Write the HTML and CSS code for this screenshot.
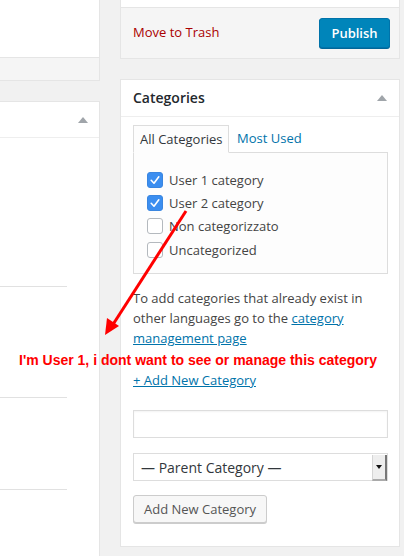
FILE: index.html
```html
<!DOCTYPE html>
<html>
<head>
<meta charset="utf-8">
<link rel="stylesheet" href="styles.css">
</head>
<body>
<div class="page">
  <div class="leftcol">
    <div class="lbox1">
      <div class="lbox1-top"></div>
      <div class="lbox1-foot"></div>
    </div>
    <div class="lbox2">
      <div class="lbox2-head"><span class="tri"></span></div>
      <div class="lbox2-body">
        <div class="rule r1"></div>
        <div class="rule r2"></div>
        <div class="rule r3"></div>
      </div>
    </div>
  </div>
  <div class="rightcol">
    <div class="pubbox">
      <div class="pub-top"></div>
      <div class="pub-foot">
        <a class="trash">Move to Trash</a>
        <button class="publish">Publish</button>
      </div>
    </div>
    <div class="catbox">
      <div class="cat-head">
        <h2>Categories</h2>
        <span class="tri"></span>
      </div>
      <div class="cat-inside">
        <div class="tabs">
          <span class="tab active">All Categories</span>
          <a class="tab link">Most Used</a>
        </div>
        <div class="panel">
          <ul class="checklist">
            <li><span class="cb checked"><svg viewBox="0 0 16 16" width="16" height="16"><path d="M4.2 8.3 L7 11.2 L11.8 4.8" fill="none" stroke="#fff" stroke-width="1.6" stroke-linecap="round" stroke-linejoin="round"/></svg></span>User 1 category</li>
            <li><span class="cb checked"><svg viewBox="0 0 16 16" width="16" height="16"><path d="M4.2 8.3 L7 11.2 L11.8 4.8" fill="none" stroke="#fff" stroke-width="1.6" stroke-linecap="round" stroke-linejoin="round"/></svg></span>User 2 category</li>
            <li><span class="cb"></span>Non categorizzato</li>
            <li><span class="cb"></span>Uncategorized</li>
          </ul>
        </div>
        <p class="note">To add categories that already exist in other languages go to the <a class="ul">category management page</a></p>
        <a class="ul addnew">+ Add New Category</a>
        <div class="field"></div>
        <div class="select"><span class="seltext">— Parent Category —</span><span class="selarrow"></span></div>
        <button class="btn">Add New Category</button>
      </div>
    </div>
  </div>
  <div class="annot">I'm User 1, i dont want to see or manage this category</div>
  <svg class="arrow" width="404" height="556" viewBox="0 0 404 556">
    <line x1="186" y1="211" x2="112" y2="326" stroke="#f00" stroke-width="3"/>
    <polygon points="105,335 107,318 119,326" fill="#f00"/>
  </svg>
</div>
</body>
</html>
```

FILE: styles.css
```css
* { box-sizing: border-box; }
html, body { margin: 0; padding: 0; }
body {
  background: #f1f1f1;
  font-family: "Open Sans", "Noto Sans", sans-serif;
  font-size: 13px;
  color: #444;
  width: 404px;
  height: 556px;
  overflow: hidden;
}
.page {
  position: relative;
  display: grid;
  grid-template-columns: 100px 280px;
  column-gap: 20px;
  height: 556px;
}
.leftcol { display: flex; flex-direction: column; }
.lbox1 {
  border-right: 1px solid #e5e5e5;
  border-bottom: 1px solid #e5e5e5;
  background: #fff;
}
.lbox1-top { height: 58px; border-bottom: 1px solid #e5e5e5; }
.lbox1-foot { height: 22px; background: #f5f5f5; }
.lbox2 {
  margin-top: 20px;
  flex: 1;
  background: #fff;
  border-top: 1px solid #e5e5e5;
  border-right: 1px solid #e5e5e5;
  display: flex;
  flex-direction: column;
}
.lbox2-head {
  height: 36px;
  border-bottom: 1px solid #eee;
  display: flex;
  align-items: center;
  justify-content: flex-end;
  padding-right: 11px;
}
.lbox2-body { flex: 1; position: relative; }
.rule { width: 67px; border-top: 1px solid #e1e1e1; }
.r1 { margin-top: 148px; }
.r2 { margin-top: 110px; }
.r3 { margin-top: 91px; }
.tri {
  width: 0; height: 0;
  border-left: 5px solid transparent;
  border-right: 5px solid transparent;
  border-bottom: 6px solid #a0a5aa;
}
.rightcol { display: flex; flex-direction: column; }
.pubbox {
  background: #fff;
  border-left: 1px solid #e5e5e5;
  border-right: 1px solid #e5e5e5;
  border-bottom: 1px solid #e5e5e5;
}
.pub-top { height: 8px; border-bottom: 1px solid #e5e5e5; }
.pub-foot {
  height: 50px;
  background: #f5f5f5;
  display: flex;
  align-items: center;
  justify-content: space-between;
  padding: 0 9px 0 12px;
}
.trash { color: #a00; font-size: 13px; margin-top: -2px; }
.publish {
  font-family: "Open Sans", "Noto Sans", sans-serif;
  font-size: 13px;
  font-weight: 600;
  color: #fff;
  background: #0085ba;
  border: 1px solid #0073aa;
  border-radius: 3px;
  box-shadow: 0 1px 0 #006799;
  height: 30px;
  width: 71px;
  padding: 0;
  margin-top: -1px;
}
.catbox {
  margin-top: 20px;
  background: #fff;
  border: 1px solid #e5e5e5;
  height: 468px;
}
.cat-head {
  height: 37px;
  border-bottom: 1px solid #eee;
  display: flex;
  align-items: center;
  justify-content: space-between;
  padding: 0 12px 0 12px;
}
.cat-head h2 {
  margin: 0;
  font-size: 14px;
  font-weight: 600;
  color: #23282d;
  margin-top: -1px;
}
.cat-inside { padding: 8px 11px 0 12px; display: flex; flex-direction: column; align-items: flex-start; }
.tabs { display: flex; height: 28px; position: relative; z-index: 1; }
.tab {
  height: 28px;
  line-height: 26px;
  padding: 0 8px 0 8px;
}
.tab.active {
  border: 1px solid #ddd;
  border-bottom: 1px solid #fdfdfd;
  background: #fdfdfd;
  color: #32373c;
  width: 96px;
  padding: 0 0 0 6px;
}
.tab.link { color: #0073aa; padding-left: 8px; }
.panel {
  margin-top: -1px;
  width: 255px;
  height: 122px;
  border: 1px solid #ddd;
  background: #fdfdfd;
}
.checklist { list-style: none; margin: 0; padding: 15px 0 0 13px; }
.checklist li {
  height: 23.4px;
  display: flex;
  align-items: center;
  color: #444;
}
.cb {
  width: 16px; height: 16px;
  border: 1px solid #b4b9be;
  border-radius: 3px;
  background: #fff;
  margin-right: 6px;
  flex: none;
  display: flex;
}
.cb.checked {
  background: #3b8ef0;
  border-color: #3a86e0;
}
.cb svg { margin: -1px; }
.note {
  margin: 14px 0 0 0;
  line-height: 20px;
  width: 255px;
}
.ul { color: #0073aa; text-decoration: underline; }
.addnew { line-height: 20px; margin-top: 22px; }
.field {
  margin-top: 20px;
  width: 255px;
  height: 28px;
  border: 1px solid #ddd;
  background: #fff;
  box-shadow: inset 0 1px 2px rgba(0,0,0,0.05);
}
.select {
  margin-top: 15px;
  width: 255px;
  height: 28px;
  border: 1px solid #ddd;
  background: #fff;
  display: flex;
  align-items: center;
  justify-content: space-between;
}
.seltext { padding-left: 7px; color: #32373c; font-size: 14px; }
.selarrow {
  width: 15px;
  height: 26px;
  background: #eee;
  border-left: 1px solid #d5d5d5;
  border-right: 2px solid #777;
  border-bottom: 2px solid #aaa;
  position: relative;
  margin-top: 1px;
}
.selarrow::after {
  content: "";
  position: absolute;
  left: 3px; top: 10px;
  border-left: 3px solid transparent;
  border-right: 3px solid transparent;
  border-top: 4px solid #111;
}
.btn {
  margin-top: 14px;
  font-family: "Open Sans", "Noto Sans", sans-serif;
  font-size: 13px;
  color: #555;
  background: #f7f7f7;
  border: 1px solid #ccc;
  border-radius: 3px;
  box-shadow: 0 1px 0 #ccc;
  height: 28px;
  width: 134px;
  padding: 0;
}
.annot {
  position: absolute;
  left: 19px;
  top: 352px;
  font-family: "Liberation Sans", Arial, sans-serif;
  font-weight: bold;
  font-size: 14px;
  color: #f00;
  white-space: nowrap;
}
.arrow { position: absolute; left: 0; top: 0; pointer-events: none; }
```
